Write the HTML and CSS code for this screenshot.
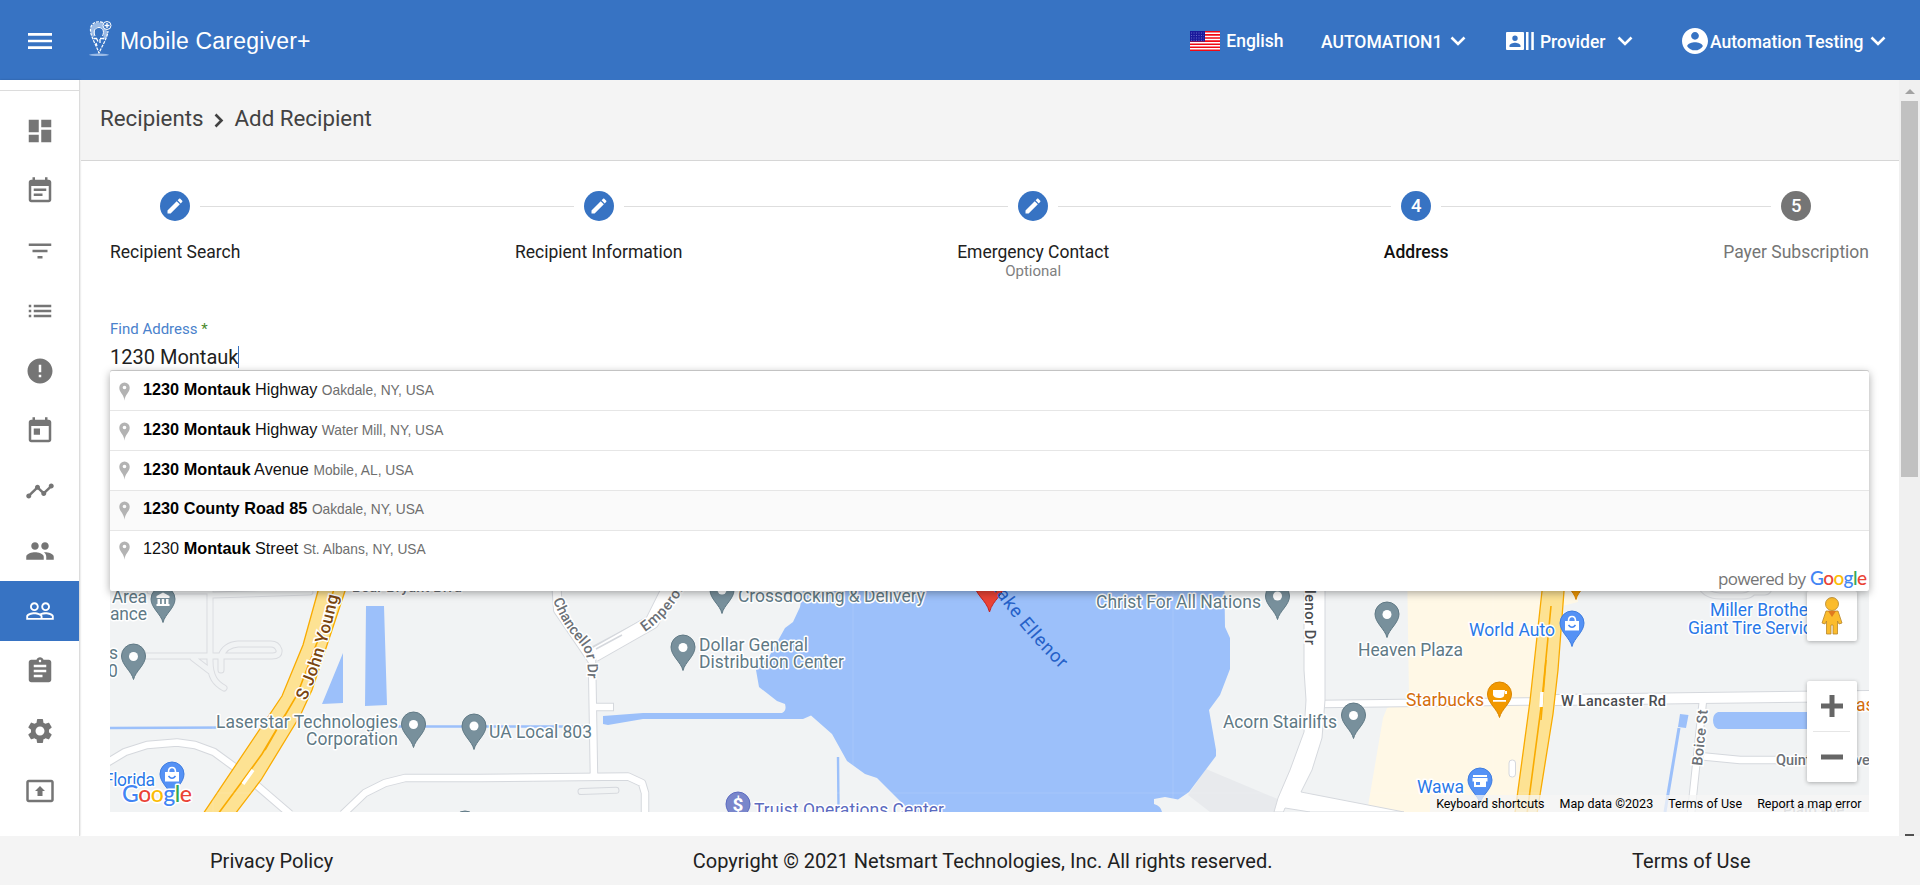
FILE: index.html
```html
<!DOCTYPE html>
<html lang="en">
<head>
<meta charset="utf-8">
<title>Mobile Caregiver+ | Add Recipient</title>
<link rel="stylesheet" href="styles.css">
</head>
<body>
<header class="topbar">
  <svg class="menu" viewBox="0 0 24 24"><path d="M3 18h18v-2H3v2zm0-5h18v-2H3v2zm0-7v2h18V6H3z"/></svg>
  <svg class="logo" viewBox="0 0 24 36">
    <path d="M3.500 15C0 8 2 1.500 10 1.500c4 0 6 .5 7 2.500-1 3 1 6 2 8l-2 5-2.500 2V11c0-3-2-5-5-5s-4 3-3.500 6l-1 4z" fill="#9bbbe6"/>
    <path d="M14 1.500C7-1 1 3 1.500 9.500 2 16 7 24 10 32 13 25 18 18 19 10" fill="none" stroke="#fff" stroke-width="1.200" stroke-dasharray="3 1"/>
    <path d="M6 15C3.500 9 7 6.500 10 6.500s6 3 3.500 8.500" fill="none" stroke="#fff"/>
    <path d="M4.500 17.500h3l1.500 3M11 17.500h4M11 18v4M7 22l1 3" fill="none" stroke="#fff" stroke-width="1.300"/>
    <circle cx="18" cy="4.500" r="4" fill="#3773c3" stroke="#fff"/><path d="M15.500 4.500h5M18 2v5" stroke="#fff" stroke-width="1.300"/>
    <ellipse cx="10" cy="33.800" rx="10" ry="1.300" fill="#9bbbe6"/>
  </svg>
  <div class="brand">Mobile Caregiver<span class="plus">+</span></div>
  <div class="lang">
    <svg class="flag" viewBox="0 0 30 20"><path fill="#fff" d="M0 0h30v20H0z"/><path d="M0 .8h30M0 3.900h30M0 7h30M0 10.100h30M0 13.200h30M0 16.300h30M0 19.300h30" stroke="#f00a14" stroke-width="1.600"/><path fill="#1a1a9c" d="M0 0h15v10.500H0z"/><path d="M1 2h13M1 4.500h13M1 7h13M1 9.300h13" stroke="#7c7cd0" stroke-width=".8" stroke-dasharray="1 1.500"/></svg>
    <span>English</span>
  </div>
  <div class="pick agency"><span>AUTOMATION1</span><svg class="chev" viewBox="0 0 16 10"><path d="M1.500 1.500L8 8l6.500-6.500"/></svg></div>
  <div class="pick role"><svg class="badge" viewBox="0 0 28 18"><path fill-rule="evenodd" d="M1 0h16a1 1 0 011 1v16a1 1 0 01-1 1H1a1 1 0 01-1-1V1a1 1 0 011-1zm8 3.500a2.700 2.700 0 100 5.400 2.700 2.700 0 000-5.400zM3.500 15h11v-1.200c0-2-3.600-3-5.500-3s-5.500 1-5.500 3zM20 0h2.500v18H20zM25.300 0h2.500v18h-2.500z"/></svg><span>Provider</span><svg class="chev" viewBox="0 0 16 10"><path d="M1.500 1.500L8 8l6.500-6.500"/></svg></div>
  <div class="pick user"><svg class="avatar" viewBox="2 2 20 20"><path d="M12 2C6.480 2 2 6.480 2 12s4.480 10 10 10 10-4.480 10-10S17.520 2 12 2zm0 3c1.660 0 3 1.340 3 3s-1.340 3-3 3-3-1.340-3-3 1.340-3 3-3zm0 14.200c-2.500 0-4.710-1.280-6-3.220.03-1.990 4-3.080 6-3.080 1.990 0 5.970 1.090 6 3.080-1.290 1.940-3.500 3.220-6 3.220z"/></svg><span>Automation Testing</span><svg class="chev" viewBox="0 0 16 10"><path d="M1.500 1.500L8 8l6.500-6.500"/></svg></div>
</header>

<div class="shell">
  <nav class="rail">
    <a class="item"><svg viewBox="0 0 24 24"><path d="M3 13h8V3H3v10zm0 8h8v-6H3v6zm10 0h8V11h-8v10zm0-18v6h8V3h-8z"/></svg></a>
    <a class="item"><svg viewBox="0 0 24 24"><path d="M17 10H7v2h10v-2zm2-7h-1V1h-2v2H8V1H6v2H5c-1.110 0-1.990.9-1.990 2L3 19c0 1.100.89 2 2 2h14c1.100 0 2-.9 2-2V5c0-1.100-.9-2-2-2zm0 16H5V8h14v11zm-5-5H7v2h7v-2z"/></svg></a>
    <a class="item"><svg viewBox="0 0 24 24"><path d="M10 18h4v-2h-4v2zM3 6v2h18V6H3zm3 7h12v-2H6v2z"/></svg></a>
    <a class="item"><svg viewBox="0 0 24 24"><path d="M3 13h2v-2H3v2zm0 4h2v-2H3v2zm0-8h2V7H3v2zm4 4h14v-2H7v2zm0 4h14v-2H7v2zM7 7v2h14V7H7z"/></svg></a>
    <a class="item"><svg viewBox="0 0 24 24"><path d="M12 2C6.480 2 2 6.480 2 12s4.480 10 10 10 10-4.480 10-10S17.520 2 12 2zm1 15h-2v-2h2v2zm0-4h-2V7h2v6z"/></svg></a>
    <a class="item"><svg viewBox="0 0 24 24"><path d="M19 3h-1V1h-2v2H8V1H6v2H5c-1.110 0-1.990.9-1.990 2L3 19c0 1.100.89 2 2 2h14c1.100 0 2-.9 2-2V5c0-1.100-.9-2-2-2zm0 16H5V8h14v11zM7 10h5v5H7z"/></svg></a>
    <a class="item"><svg viewBox="0 0 24 24"><path d="M23 8c0 1.100-.9 2-2 2-.18 0-.35-.02-.51-.07l-3.560 3.550c.05.160.07.340.07.520 0 1.100-.9 2-2 2s-2-.9-2-2c0-.18.02-.36.07-.52l-2.550-2.550c-.16.050-.34.070-.52.070s-.36-.02-.52-.07l-4.550 4.560c.05.160.07.330.07.510 0 1.100-.9 2-2 2s-2-.9-2-2 .9-2 2-2c.18 0 .35.020.51.070l4.560-4.550C8.020 9.360 8 9.180 8 9c0-1.100.9-2 2-2s2 .9 2 2c0 .18-.02.36-.07.52l2.550 2.550c.16-.05.34-.07.52-.07s.36.020.52.070l3.550-3.560C19.020 8.350 19 8.180 19 8c0-1.100.9-2 2-2s2 .9 2 2z"/></svg></a>
    <a class="item"><svg viewBox="0 0 24 24"><path d="M16 11c1.660 0 2.990-1.340 2.990-3S17.660 5 16 5c-1.660 0-3 1.340-3 3s1.340 3 3 3zm-8 0c1.660 0 2.990-1.340 2.990-3S9.660 5 8 5C6.340 5 5 6.340 5 8s1.340 3 3 3zm0 2c-2.330 0-7 1.170-7 3.500V19h14v-2.500c0-2.330-4.670-3.500-7-3.500zm8 0c-.29 0-.62.020-.97.050 1.160.84 1.970 1.970 1.970 3.450V19h6v-2.500c0-2.330-4.670-3.500-7-3.500z"/></svg></a>
    <a class="item active"><svg viewBox="0 0 24 24"><path d="M16.500 13c-1.200 0-3.070.34-4.500 1-1.430-.67-3.300-1-4.500-1C5.330 13 1 14.080 1 16.250V19h22v-2.750c0-2.170-4.330-3.250-6.500-3.250zm-4 4.500h-10v-1.250c0-.54 2.560-1.750 5-1.750s5 1.210 5 1.750v1.250zm9 0H14v-1.250c0-.46-.2-.86-.52-1.220.88-.3 1.960-.53 3.020-.53 2.440 0 5 1.210 5 1.750v1.250zM7.500 12c1.930 0 3.500-1.570 3.500-3.500S9.430 5 7.500 5 4 6.570 4 8.500 5.570 12 7.500 12zm0-5.500c1.100 0 2 .9 2 2s-.9 2-2 2-2-.9-2-2 .9-2 2-2zm9 5.500c1.930 0 3.500-1.570 3.500-3.500S18.430 5 16.500 5 13 6.570 13 8.500s1.570 3.500 3.500 3.500zm0-5.500c1.100 0 2 .9 2 2s-.9 2-2 2-2-.9-2-2 .9-2 2-2z"/></svg></a>
    <a class="item"><svg viewBox="0 0 24 24"><path d="M19 3h-4.180C14.400 1.840 13.300 1 12 1c-1.300 0-2.400.84-2.820 2H5c-1.100 0-2 .9-2 2v14c0 1.100.9 2 2 2h14c1.100 0 2-.9 2-2V5c0-1.100-.9-2-2-2zm-7 0c.55 0 1 .45 1 1s-.45 1-1 1-1-.45-1-1 .45-1 1-1zm2 14H7v-2h7v2zm3-4H7v-2h10v2zm0-4H7V7h10v2z"/></svg></a>
    <a class="item"><svg viewBox="0 0 24 24"><path d="M19.140 12.940c.04-.3.060-.61.060-.94 0-.32-.02-.64-.07-.94l2.030-1.580c.18-.14.23-.41.120-.61l-1.920-3.320c-.12-.22-.37-.29-.59-.22l-2.390.96c-.5-.38-1.030-.7-1.620-.94l-.36-2.540c-.04-.24-.24-.41-.48-.41h-3.840c-.24 0-.43.170-.47.410l-.36 2.540c-.59.240-1.130.57-1.620.94l-2.390-.96c-.22-.08-.47 0-.59.220L2.740 8.870c-.12.210-.08.470.120.610l2.030 1.580c-.05.300-.09.630-.09.940s.02.640.07.940l-2.030 1.580c-.18.140-.23.410-.12.610l1.920 3.320c.12.220.37.290.59.220l2.390-.96c.5.380 1.030.7 1.620.94l.36 2.540c.05.240.24.410.48.410h3.840c.24 0 .44-.17.47-.41l.36-2.540c.59-.24 1.130-.56 1.620-.94l2.390.96c.22.080.47 0 .59-.22l1.920-3.320c.12-.22.070-.47-.12-.61l-2.010-1.580zM12 15.600c-1.980 0-3.600-1.620-3.600-3.600s1.620-3.600 3.600-3.600 3.600 1.620 3.600 3.600-1.620 3.600-3.600 3.600z"/></svg></a>
    <a class="item"><svg viewBox="0 0 24 24"><path d="M21 3H3c-1.110 0-2 .89-2 2v14c0 1.100.89 2 2 2h18c1.110 0 2-.9 2-2V5c0-1.110-.89-2-2-2zm0 16.020H3V4.980h18v14.040zM10 12H8l4-4 4 4h-2v4h-4v-4z"/></svg></a>
  </nav>

  <main class="page">
    <div class="crumbs"><span>Recipients</span><svg viewBox="0 0 10 15"><path d="M1.500 1.500L7.500 7.500l-6 6"/></svg><span>Add Recipient</span></div>

    <div class="content">
      <div class="stepper">
        <div class="step first"><div class="head"><i class="line"></i><b class="dot"><svg viewBox="0 0 24 24"><path d="M3 17.250V21h3.750L17.810 9.940l-3.750-3.750L3 17.250zM20.710 7.040c.39-.39.39-1.020 0-1.410l-2.340-2.340c-.39-.39-1.020-.39-1.410 0l-1.830 1.830 3.750 3.750 1.830-1.830z"/></svg></b><i class="line"></i></div><span>Recipient Search</span></div>
        <i class="join"></i>
        <div class="step"><div class="head"><i class="line"></i><b class="dot"><svg viewBox="0 0 24 24"><path d="M3 17.250V21h3.750L17.810 9.940l-3.750-3.750L3 17.250zM20.710 7.040c.39-.39.39-1.020 0-1.410l-2.340-2.340c-.39-.39-1.020-.39-1.410 0l-1.830 1.830 3.750 3.750 1.830-1.830z"/></svg></b><i class="line"></i></div><span>Recipient Information</span></div>
        <i class="join"></i>
        <div class="step"><div class="head"><i class="line"></i><b class="dot"><svg viewBox="0 0 24 24"><path d="M3 17.250V21h3.750L17.810 9.940l-3.750-3.750L3 17.250zM20.710 7.040c.39-.39.39-1.020 0-1.410l-2.340-2.340c-.39-.39-1.020-.39-1.410 0l-1.830 1.830 3.750 3.750 1.830-1.830z"/></svg></b><i class="line"></i></div><span>Emergency Contact</span><small>Optional</small></div>
        <i class="join"></i>
        <div class="step current"><div class="head"><i class="line"></i><b class="dot">4</b><i class="line"></i></div><span>Address</span></div>
        <i class="join"></i>
        <div class="step last"><div class="head"><i class="line"></i><b class="dot">5</b><i class="line"></i></div><span>Payer Subscription</span></div>
      </div>

      <label class="label">Find Address <em>*</em></label>
      <div class="field">1230 Montauk<i class="caret"></i></div>

      <div class="mapwrap">
        <svg class="map" viewBox="110 371 1759 441">
          <defs>
            <g id="pin"><path d="M0 23.500C-2 15-12 9-12 0a12 12 0 0124 0C12 9 2 15 0 23.500z"/></g>
          </defs>
          <g fill="none" stroke-linecap="round" stroke-linejoin="round">
            <path d="M210 560V661Q210 672 214 679Q217 684 224 688M130 656H272Q280 656 279 650Q277 644 271 644H238Q225 645 221 656V670M193 658L210 671M150 591H210M212 595L310 592M1700 585Q1706 596 1720 596H1742Q1754 596 1756 585M1754 592H1765Q1769 592 1770 585" stroke="#dadce0" stroke-width="7"/>
            <path d="M210 560V661Q210 672 214 679Q217 684 224 688M130 656H272Q280 656 279 650Q277 644 271 644H238Q225 645 221 656V670M193 658L210 671M150 591H210M212 595L310 592M1700 585Q1706 596 1720 596H1742Q1754 596 1756 585M1754 592H1765Q1769 592 1770 585" stroke="#f1f3f4" stroke-width="5"/>
          </g>
          <path fill="#fff8e6" d="M1407 560L1409 699 1387 708 1383 718 1367 812H1520L1560 560zM1560 560H1578V602L1562 606z"/>
          <path fill="#e8eaed" d="M1206 769L1280 800 1275 812H1210L1188 795z"/>
          <g fill="#9cc0fa">
            <path d="M343 653V703L322 704zM366 606H384L387 705 365 706z"/>
            <path d="M808 560L803 591 800 607 793 622 785 628 770 655 756 670 759 687 777 701 785 704Q787 711 782 713H643L603 716V724L608 725 643 719H803L811 715.500 832 734 847 761 865 774 877 778 905 806V812H1162Q1161 806 1154 804V799L1165 797 1178 799.500 1189 792 1216 756V750L1209 710 1220 695 1230 669V638L1225 627 1224 560z"/>
            <path d="M1680 714L1688.500 715 1686 728 1678 727zM1718 712H1840V729H1718Q1713 727 1713 720 1713 714 1718 712z"/>
          </g>
          <path d="M110 728L230 727.500M340 726.500H590M838 757L838.500 806" stroke="#9cc0fa" stroke-width="2.400" fill="none"/>
          <path d="M1679 728L1667 800 1665 812" stroke="#9cc0fa" stroke-width="3" fill="none"/>
          <g fill="none" stroke-linejoin="round">
            <path d="M100 767L125 752 147 745 177 742.500 195 745 214 752 240 771 290 814M343 814L365 793 385 783 405 778 480 778 628 776.500 642 783 645 793V814M594 778L592 660M592 707H614M1320 704L1530 701.500M1703 700L1691 814M1704 756.500L1740 760H1870" stroke="#d5d8dd" stroke-width="8.500"/>
            <path d="M556 580L558 610 592 660M592 652L652 620 673 580" stroke="#d5d8dd" stroke-width="10"/>
            <path d="M594 655L652 622 673 580" stroke="#d5d8dd" stroke-width="15"/>
            <path d="M1555 700L1700 698 1870 696" stroke="#d5d8dd" stroke-width="12"/>
            <path d="M1555 700L1700 698 1870 696" stroke="#fff" stroke-width="10"/>
            <path d="M594 655L652 622 673 580" stroke="#fff" stroke-width="13"/>
            <path d="M556 580L558 610 592 660" stroke="#fff" stroke-width="8"/>
            <path d="M100 767L125 752 147 745 177 742.500 195 745 214 752 240 771 290 814M343 814L365 793 385 783 405 778 480 778 628 776.500 642 783 645 793V814M594 778L592 660M592 707H613M1320 704L1530 701.500M1703 700L1691 814M1704 756.500L1740 760H1870" stroke="#fff" stroke-width="6.500"/>
            <path d="M596 649L622 635" stroke="#d5d8dd" stroke-width="1.500"/>
          </g>
          <path d="M1304 560V670L1306 700 1304 732 1290 770 1278 798 1274 812H1404L1301 792 1312 770 1322 738 1325 700V560z" fill="#fff" stroke="#d5d8dd"/>
          <path d="M1283 813L1285 808 1310 812" fill="#f1f3f4" stroke="#d5d8dd"/>
          <rect x="578" y="788" width="41" height="6" rx="3" fill="#f1f3f4" stroke="#d5d8dd" transform="rotate(-2 598 791)"/>
          <rect x="1509" y="760" width="6.500" height="17" rx="3" fill="#fff" stroke="#d5d8dd"/>
          <g fill="#fde293" stroke="#f9ab00" stroke-width="1.300">
            <path d="M326 560L318 591 303 645 282 696 203 814H235L261 780 300 716 312 690 345 591 352 560z"/>
            <path d="M1545 560L1542 591 1530 701 1514 820H1536L1553 714 1558 670 1564 591V560z"/>
          </g>
          <g fill="none" stroke="#f9ab00" stroke-width="1.600">
            <path d="M340 570L318 640 297 695 284 717 262 754 241 783 218 814M285 715L265 750"/>
            <path d="M1551 606L1542 700 1527 814"/>
            <path d="M1546 660L1541 720"/>
          </g>
          <path d="M243 784L253 770M1542 692L1541 707" stroke="#fff" stroke-width="3.500"/>
          <path d="M213 591V812M533 591V812M853 591V812M1173 591V812M1493 591V812M1813 591V812M110 793H1869" stroke="#fff" stroke-opacity=".12"/>

          <g class="pins">
            <use href="#pin" x="163" y="599"/><use href="#pin" x="133.500" y="656"/><use href="#pin" x="413.500" y="724"/><use href="#pin" x="474" y="726"/><use href="#pin" x="722" y="590"/><use href="#pin" x="683" y="647"/><use href="#pin" x="1277.500" y="596"/><use href="#pin" x="1387" y="614"/><use href="#pin" x="1353.500" y="715"/><use href="#pin" x="465" y="823"/>
          </g>
          <g fill="#fff"><circle cx="133.500" cy="656.500" r="4.500"/><circle cx="413.500" cy="724.500" r="4.500"/><circle cx="474" cy="726" r="4.500"/><circle cx="722" cy="590" r="4.500"/><circle cx="683" cy="647.500" r="4.500"/><circle cx="1277.500" cy="596" r="4.500"/><circle cx="1387" cy="614.500" r="4.500"/><circle cx="1353.500" cy="715.500" r="4.500"/>
            <path d="M163 592.500L156.500 596V598H169.500V596zM157.500 599H160V604H157.500zM161.800 599H164.200V604H161.800zM166 599H168.500V604H166zM156.500 604H169.500V606H156.500z"/></g>
          <g fill="#5491f5" stroke="#3f7de0"><use href="#pin" x="1572" y="623"/><use href="#pin" x="1480" y="780"/><use href="#pin" x="172" y="774"/></g>
          <g fill="#f29900" stroke="#d98500"><use href="#pin" x="1499.500" y="694"/><use href="#pin" x="1576" y="576"/></g>
          <g fill="#7986cb" stroke="#5c6bc0"><use href="#pin" x="738" y="804"/></g>
          <text x="732.500" y="811" font-size="19" font-weight="700" fill="#fff">$</text>
          <g id="bag"><path d="M1565 621H1579V630.500H1565z" fill="#fff"/><path d="M1568.500 621Q1568.500 616.500 1572 616.500T1575.500 621" fill="none" stroke="#fff" stroke-width="1.600"/><path d="M1568.500 625Q1572 629.500 1575.500 625" fill="none" stroke="#4285f4" stroke-width="1.500"/></g>
          <use href="#bag" x="-1400" y="151"/>
          <path d="M1493 690H1505L1504 696Q1503 698 1499 698 1494 698 1493 695zM1505 691H1507V694H1505M1493 700H1506V701.800H1493z" fill="#fff"/>
          <path d="M1473 775H1487V777H1473zM1472.500 778H1487.500V781.500H1486V787H1474V781.500H1472.500zM1476 782V785H1480V782z" fill="#fff" fill-rule="evenodd"/>
          <path d="M973 580C975 596 986 599 989.500 612 993 599 1004 596 1006 580z" fill="#ea4335" stroke="#c5221f"/>

          <g class="poi">
            <text x="112" y="603" textLength="35">Area</text><text x="110" y="620" textLength="37">ance</text>
            <text x="109" y="659">s</text><text x="108" y="677">0</text>
            <text x="216" y="728" textLength="182">Laserstar Technologies</text><text x="306" y="745" textLength="92">Corporation</text>
            <text x="489" y="738" textLength="103">UA Local 803</text>
            <text x="738" y="602" textLength="187">Crossdocking &amp; Delivery</text>
            <text x="699" y="651" textLength="109">Dollar General</text><text x="699" y="668" textLength="145">Distribution Center</text>
            <text x="1096" y="608" textLength="165">Christ For All Nations</text>
            <text x="1358" y="656" textLength="105">Heaven Plaza</text>
            <text x="1223" y="728" textLength="114">Acorn Stairlifts</text>
            <text class="blue" x="1469" y="636" textLength="86">World Auto</text>
            <text class="blue" x="1710" y="616" textLength="113">Miller Brothers</text><text class="blue" x="1688" y="634" textLength="133">Giant Tire Service</text>
            <text class="blue" x="1417" y="793" textLength="47">Wawa</text>
            <text class="blue" x="104" y="786" textLength="51">Florida</text>
            <text class="orange" x="1406" y="706" textLength="78">Starbucks</text><text class="orange" x="1856" y="711">as</text>
            <text class="violet" x="754" y="816" textLength="190">Truist Operations Center</text>
          </g>
          <g class="street">
            <text x="352" y="592" textLength="110">Bear Bryant Blvd</text>
            <text x="1561" y="706" textLength="105" fill="#4a4d51">W Lancaster Rd</text>
            <text x="1776" y="765">Quintana</text><text x="1855" y="765">ve</text>
            <text transform="translate(1702 766) rotate(-84)" textLength="56">Boice St</text>
            <text transform="translate(1305 577) rotate(90)" textLength="68" fill="#4a4d51">Ellenor Dr</text>
            <path id="ch" d="M553 600Q562 625 580 644 590 655 587 682" fill="none"/>
            <text><textPath href="#ch" textLength="88">Chancellor Dr</textPath></text>
            <path id="em" d="M645 632Q670 615 684 588L690 570" fill="none"/>
            <text class="wide"><textPath href="#em">Emperor</textPath></text>
            <text x="1783" y="815" opacity=".6">Plato Ave</text>
            <path id="jy" d="M306 701C320 670 332 630 346 560" fill="none"/>
            <text class="hwy"><textPath href="#jy">S John Young Pkwy</textPath></text>
            <path id="lk" d="M990 585Q1024 636 1072 680" fill="none"/>
            <text class="lake"><textPath href="#lk">Lake Ellenor</textPath></text>
          </g>
          <text class="gmap" x="122" y="802" textLength="70"><tspan fill="#4285f4">G</tspan><tspan fill="#ea4335">o</tspan><tspan fill="#fbbc04">o</tspan><tspan fill="#4285f4">g</tspan><tspan fill="#34a853">l</tspan><tspan fill="#ea4335">e</tspan></text>
        </svg>

        <div class="pegman"><svg viewBox="0 0 22 38"><g fill="#fbbc2d" stroke="#b8862a" stroke-width=".8"><path d="M5 14h12l4 12-3 1-1.500-3V37H12V28h-2v9H5.500V24L4 27l-3-1z"/><circle cx="11" cy="7" r="6.500"/></g><path d="M7 14h8l-4 6z" fill="#e07a1f"/></svg></div>
        <div class="zoom"><svg viewBox="0 0 50 50"><path d="M25 14v22M14 25h22"/></svg><i></i><svg viewBox="0 0 50 50"><path d="M14 25h22"/></svg></div>
        <div class="credits"><span>Keyboard shortcuts</span><span>Map data ©2023</span><span>Terms of Use</span><span>Report a map error</span></div>

        <div class="results">
          <div class="row"><svg viewBox="0 0 12 20"><path fill-rule="evenodd" d="M6 20C5.500 13 .3 11 .3 5.800a5.700 5.700 0 0111.400 0C11.700 11 6.500 13 6 20zM6 3.600a2 2 0 100 4 2 2 0 000-4z"/></svg><p><b>1230 Montauk</b> Highway <small>Oakdale, NY, USA</small></p></div>
          <div class="row"><svg viewBox="0 0 12 20"><path fill-rule="evenodd" d="M6 20C5.500 13 .3 11 .3 5.800a5.700 5.700 0 0111.400 0C11.700 11 6.500 13 6 20zM6 3.600a2 2 0 100 4 2 2 0 000-4z"/></svg><p><b>1230 Montauk</b> Highway <small>Water Mill, NY, USA</small></p></div>
          <div class="row"><svg viewBox="0 0 12 20"><path fill-rule="evenodd" d="M6 20C5.500 13 .3 11 .3 5.800a5.700 5.700 0 0111.400 0C11.700 11 6.500 13 6 20zM6 3.600a2 2 0 100 4 2 2 0 000-4z"/></svg><p><b>1230 Montauk</b> Avenue <small>Mobile, AL, USA</small></p></div>
          <div class="row hover"><svg viewBox="0 0 12 20"><path fill-rule="evenodd" d="M6 20C5.500 13 .3 11 .3 5.800a5.700 5.700 0 0111.400 0C11.700 11 6.500 13 6 20zM6 3.600a2 2 0 100 4 2 2 0 000-4z"/></svg><p><b>1230 County Road 85</b> <small>Oakdale, NY, USA</small></p></div>
          <div class="row"><svg viewBox="0 0 12 20"><path fill-rule="evenodd" d="M6 20C5.500 13 .3 11 .3 5.800a5.700 5.700 0 0111.400 0C11.700 11 6.500 13 6 20zM6 3.600a2 2 0 100 4 2 2 0 000-4z"/></svg><p>1230 <b>Montauk</b> Street <small>St. Albans, NY, USA</small></p></div>
          <div class="powered"><svg viewBox="0 0 152 22"><text class="by" x="1" y="15" textLength="88">powered by</text><text class="goog" x="93" y="15" textLength="57"><tspan fill="#4285f4">G</tspan><tspan fill="#ea4335">o</tspan><tspan fill="#fbbc04">o</tspan><tspan fill="#4285f4">g</tspan><tspan fill="#34a853">l</tspan><tspan fill="#ea4335">e</tspan></text></svg></div>
        </div>
      </div>
    </div>
  </main>
  <div class="scrollbar"><i class="up"></i><i class="thumb"></i><i class="down"></i></div>
</div>

<footer class="foot"><span>Privacy Policy</span><span>Copyright © 2021 Netsmart Technologies, Inc. All rights reserved.</span><span>Terms of Use</span></footer>
</body>
</html>
```
FILE: styles.css
```css
* { box-sizing: border-box; }
body { margin: 0; width: 1920px; height: 885px; overflow: hidden; display: flex; flex-direction: column; background: #fff; font-family: Roboto, "Liberation Sans", sans-serif; color: #212121; }
svg { display: block; flex: none; }

.topbar { height: 80px; flex: none; display: flex; align-items: center; background: #3773c3; color: #fff; font-size: 17.5px; font-weight: 500; padding: 2px 34px 0 24px; }
.menu { width: 32px; height: 32px; fill: #fff; }
.logo { width: 24px; height: 36px; margin: -4px 0 0 33px; }
.brand { margin: 0 0 0 7px; font: 400 23px/30px "Liberation Sans", Arial, sans-serif; letter-spacing: .2px; flex: 1; white-space: nowrap; }
.plus { font-weight: 400; }
.lang { display: flex; gap: 6px; align-items: center; height: 22px; }
.flag { width: 30px; height: 20px; }
.pick { display: flex; align-items: center; white-space: nowrap; padding-top: 2px; }
.chev { width: 16px; height: 10px; fill: none; stroke: #fff; stroke-width: 2.600; margin-top: -3px; }
.agency { margin-left: 37.500px; gap: 8px; }
.role { margin-left: 39.500px; gap: 6px; }
.role .chev { margin-left: 6px; }
.badge { width: 28px; height: 18px; fill: #fff; margin-top: -2px; }
.user { margin-left: 48.500px; gap: 2px; }
.user .chev { margin-left: 4.500px; }
.avatar { width: 26px; height: 26px; fill: #fff; margin-top: -2px; }

.shell { flex: none; height: 756px; display: flex; }
.rail { width: 80px; flex: none; padding-top: 21px; border-right: 1px solid #dcdcdc; background: linear-gradient(#dcdcdc, #dcdcdc) 0 10px / 100% 1px no-repeat; box-shadow: 0 0 2px rgba(0,0,0,.2); }
.item { display: flex; width: 79px; height: 60px; align-items: center; justify-content: center; padding-left: 1px; }
.item svg { width: 30px; height: 30px; fill: #757575; }
.item.active { background: #3773c3; }
.item.active svg { fill: #fff; }

.page { flex: 1; min-width: 0; }
.crumbs { height: 81px; display: flex; align-items: center; gap: 10.500px; padding: 0 0 4px 19px; margin-left: 1px; background: #f4f4f4; border-bottom: 1px solid #d6d6d6; font-size: 22.300px; color: #424242; }
.crumbs svg { width: 10px; height: 15px; margin-top: 4px; fill: none; stroke: #424242; stroke-width: 2.600; }
.content { padding: 30px 30px 0; }

.stepper { display: flex; height: 129px; font-size: 17.500px; }
.step { display: flex; flex-direction: column; align-items: center; white-space: nowrap; }
.head { display: flex; align-self: stretch; align-items: center; justify-content: center; gap: 10px; height: 30px; margin-bottom: 20px; }
.line, .join { flex: 1; height: 1px; background: #dedede; }
.head .line { margin-top: 1px; }
.join { margin-top: 15px; }
.first .line:first-child, .last .line:last-child { background: none; }
.dot { width: 30px; height: 30px; flex: none; border-radius: 50%; background: #3773c3; color: #fff; display: flex; align-items: center; justify-content: center; font-size: 18.500px; font-weight: 500; }
.dot svg { width: 20px; height: 20px; fill: #fff; }
.step > span { line-height: 22px; }
.step small { font-size: 15px; line-height: 17px; color: #808080; }
.current { font-weight: 500; color: #111; }
.last { color: #757575; }
.last .dot { background: #757575; }

.label { display: block; height: 23px; font-size: 15px; line-height: 18px; color: #4a82cc; }
.label em { font-style: normal; color: #4b8a2c; }
.field { display: flex; align-items: center; height: 28px; font-size: 20px; }
.caret { width: 1px; height: 22px; background: #3773c3; }

.mapwrap { position: relative; height: 441px; }
.map { width: 1759px; height: 441px; background: #f1f3f4; font-family: Roboto, sans-serif; }
.pins { fill: #78909c; stroke: #607985; }
.poi { font-size: 17.500px; fill: #607985; paint-order: stroke; stroke: #fff; stroke-width: 3px; stroke-linejoin: round; }
.poi .blue { fill: #2979e8; }
.poi .orange { fill: #d56e0c; }
.poi .violet { fill: #5c6bc0; }
.street { font-size: 14.500px; font-weight: 500; fill: #6b7076; }
.street text { paint-order: stroke; stroke: #fff; stroke-width: 3px; }
.street .wide { letter-spacing: .7px; }
.street .hwy { fill: #7a4510; font-size: 17px; letter-spacing: .5px; }
.street .lake { fill: #2560c8; stroke: none; font-size: 18.500px; font-weight: 400; letter-spacing: .9px; }
.gmap { font: 500 23px Lato, sans-serif; paint-order: stroke; stroke: #fff; stroke-width: 3px; stroke-linejoin: round; }

.pegman, .zoom { position: absolute; right: 12px; width: 50px; background: #fff; border-radius: 2px; box-shadow: 0 1px 4px rgba(0,0,0,.3); }
.pegman { top: 220px; height: 50px; display: flex; justify-content: center; padding-top: 6px; }
.pegman svg { width: 22px; height: 38px; }
.zoom { top: 310px; height: 101px; }
.zoom svg { width: 50px; height: 50px; stroke: #666; stroke-width: 5; }
.zoom i { display: block; height: 1px; margin: 0 7px 0 6px; background: #e6e6e6; }
.credits { position: absolute; right: 0; bottom: 0; height: 17px; display: flex; gap: 15px; padding: 0 7.500px 0 6px; background: rgba(245,245,245,.75); font-size: 12.500px; line-height: 18px; color: #000; white-space: nowrap; }

.results { position: absolute; left: 0; right: 0; top: 0; height: 220px; background: #fff; border-radius: 2px; box-shadow: 0 2px 8px rgba(0,0,0,.35), 0 -1px 0 #d9d9d9; font-family: "Liberation Sans", Arial, sans-serif; }
.row { display: flex; height: 39.750px; align-items: center; border-top: 1px solid #e6e6e6; padding-left: 9px; gap: 13px; color: #111; }
.row:first-child { border-top: 0; height: 39.250px; }
.row.hover { background: #fafafa; }
.row svg { width: 11px; height: 19px; fill: #b3b3b3; margin-top: 1px; }
.row p { margin: 0; font-size: 16.250px; line-height: 37px; padding-bottom: 1.500px; white-space: nowrap; }
.row b { color: #000; }
.row small { font-size: 13.750px; color: #6e6e6e; }
.powered { display: flex; justify-content: flex-end; }
.powered svg { width: 152px; height: 22px; margin-top: 1px; overflow: visible; }
.by { font: 400 17px "Open Sans", sans-serif; fill: #757575; }
.goog { font: 500 19px Lato, sans-serif; }

.scrollbar { width: 21px; flex: none; display: flex; flex-direction: column; align-items: center; background: #f0f0f0; }
.up { border: 5px solid transparent; border-top: 0; border-bottom: 5px solid #a3a3a3; margin-top: 9px; }
.thumb { width: 17px; height: 376px; background: #c1c1c1; margin-top: 7px; }
.down { width: 9px; height: 2px; background: #505050; margin-top: auto; }

.foot { flex: none; height: 49px; display: flex; align-items: center; justify-content: space-between; padding: 0 169.500px 0 210px; background: #f4f4f4; font-size: 20px; }
```
